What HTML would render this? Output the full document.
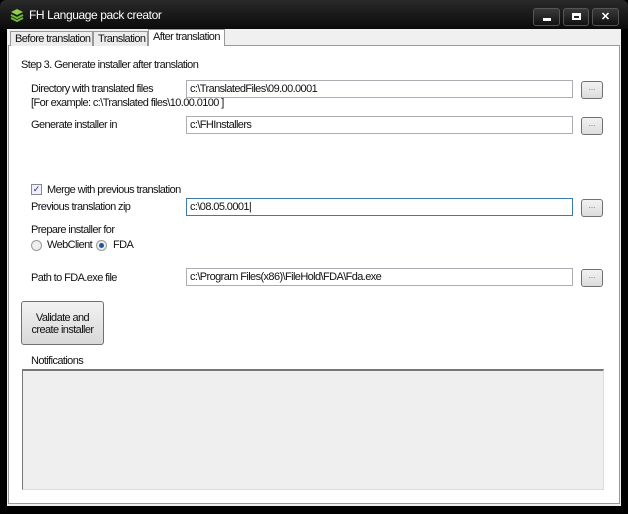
<!DOCTYPE html>
<html><head><style>
*{margin:0;padding:0;box-sizing:border-box}
body{width:628px;height:514px;background:#000;position:relative;overflow:hidden;font-family:"Liberation Sans",sans-serif;font-size:11px;color:#111;letter-spacing:-0.6px;white-space:nowrap}
.a{position:absolute}
.title{left:0;top:0;width:628px;height:29px;background:linear-gradient(#2a2a2a,#0a0a0a);border-radius:6px 6px 0 0}
.tb{top:8px;height:18px;border:1px solid #555;border-radius:3px;background:linear-gradient(#3a3a3a,#111);color:#fff;text-align:center;font-weight:bold;font-size:11px;line-height:16px;letter-spacing:0}
.frame{left:7px;top:29px;width:614px;height:477px;background:#f0f0f0}
.panel{left:8px;top:45px;width:612px;height:459px;background:#fff;border:1px solid #999}
.tab{top:31px;height:15px;border:1px solid #999;border-bottom:none;background:#ececec;line-height:14px;padding:0 4px}
.in{height:18px;border:1px solid #abadb3;background:#fff;padding-left:3px;line-height:16px}
.btn{width:22px;height:18px;border:1px solid #707070;border-radius:3px;background:linear-gradient(#f2f2f2,#dcdcdc);font-size:8px;color:#666;text-align:center;line-height:12px;letter-spacing:0}
</style></head><body>
<div class="a title"></div>
<svg class="a" style="left:10px;top:9px" width="14" height="13" viewBox="0 0 14 13"><path d="M1 3 7 0 13 3 7 6Z" fill="#8ed04a"/><path d="M1 6 7 9 13 6M1 9 7 12 13 9" stroke="#6fb83a" stroke-width="2" fill="none"/></svg>
<div class="a" style="left:29px;top:8px;color:#fff;font-size:12px;letter-spacing:-0.4px">FH Language pack creator</div>
<div class="a tb" style="left:533px;width:27px"><div style="width:8px;height:3px;background:#fff;margin:9px auto 0"></div></div>
<div class="a tb" style="left:563px;width:26px"><div style="width:9px;height:7px;border:2px solid #fff;border-top-width:3px;margin:4px auto 0"></div></div>
<div class="a tb" style="left:592px;width:27px">✕</div>
<div class="a frame"></div>
<div class="a panel"></div>
<div class="a tab" style="left:10px;width:83px">Before translation</div>
<div class="a tab" style="left:93px;width:55px">Translation</div>
<div class="a tab" style="left:148px;top:29px;height:17px;width:77px;background:#fff;line-height:15px">After translation</div>
<div class="a" style="left:21px;top:59px">Step 3. Generate installer after translation</div>
<div class="a" style="left:31px;top:83px">Directory with translated files</div>
<div class="a" style="left:31px;top:97px">[For example: c:\Translated files\10.00.0100 ]</div>
<div class="a in" style="left:186px;top:80px;width:387px">c:\TranslatedFiles\09.00.0001</div>
<div class="a btn" style="left:581px;top:81px">...</div>
<div class="a" style="left:31px;top:119px">Generate installer in</div>
<div class="a in" style="left:186px;top:116px;width:387px">c:\FHInstallers</div>
<div class="a btn" style="left:581px;top:117px">...</div>
<div class="a" style="left:31px;top:184px;width:11px;height:11px;border:1px solid #888;background:#eef;font-size:9px;line-height:9px;text-align:center;color:#236;letter-spacing:0">✓</div>
<div class="a" style="left:47px;top:184px">Merge with previous translation</div>
<div class="a" style="left:31px;top:201px">Previous translation zip</div>
<div class="a in" style="left:186px;top:198px;width:387px;border-color:#3d7bad">c:\08.05.0001|</div>
<div class="a btn" style="left:581px;top:199px">...</div>
<div class="a" style="left:31px;top:224px">Prepare installer for</div>
<div class="a" style="left:31px;top:240px;width:11px;height:11px;border-radius:50%;border:1px solid #999;background:#eee"></div>
<div class="a" style="left:47px;top:239px">WebClient</div>
<div class="a" style="left:96px;top:240px;width:11px;height:11px;border-radius:50%;border:1px solid #999;background:#eee"><div style="width:5px;height:5px;border-radius:50%;background:#1c5a9c;margin:2px"></div></div>
<div class="a" style="left:113px;top:239px">FDA</div>
<div class="a" style="left:31px;top:272px">Path to FDA.exe file</div>
<div class="a in" style="left:186px;top:268px;width:387px">c:\Program Files(x86)\FileHold\FDA\Fda.exe</div>
<div class="a btn" style="left:581px;top:269px">...</div>
<div class="a" style="left:21px;top:301px;width:83px;height:44px;border:1px solid #707070;border-radius:3px;background:linear-gradient(#f2f2f2,#d8d8d8);text-align:center;padding-top:10px;line-height:12px">Validate and<br>create installer</div>
<div class="a" style="left:31px;top:355px">Notifications</div>
<div class="a" style="left:22px;top:369px;width:582px;height:121px;background:#efefef;border:1px solid #ddd;border-top:2px solid #777;border-left:1px solid #777"></div>
</body></html>
